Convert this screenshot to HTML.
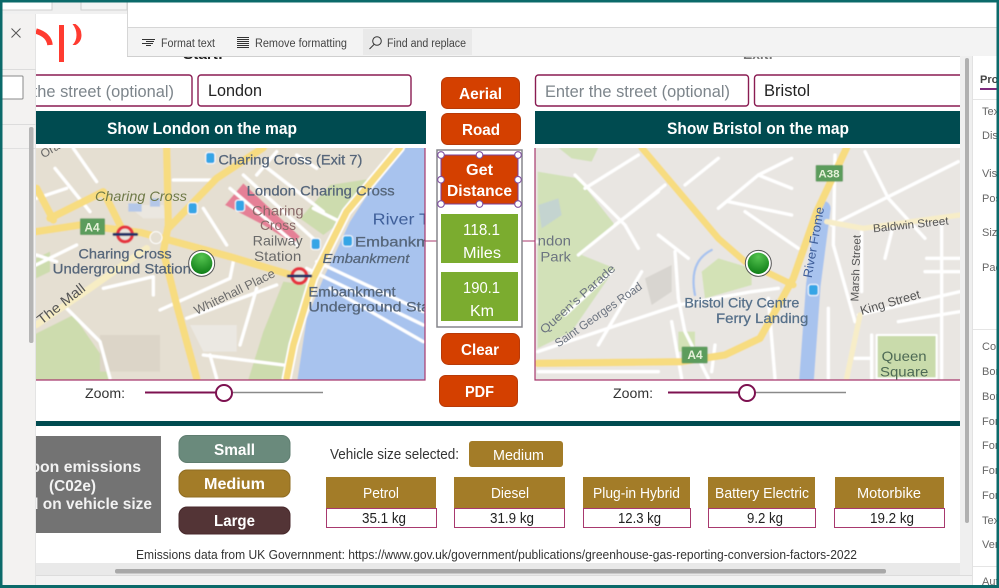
<!DOCTYPE html>
<html lang="en"><head><meta charset="utf-8"><title>Map distance app editor</title>
<style>html,body{margin:0;padding:0;background:#fff;width:999px;height:588px;overflow:hidden}svg{display:block;filter:blur(.3px)}text{font-family:"Liberation Sans",sans-serif}</style></head>
<body>
<svg width="999" height="588" viewBox="0 0 999 588" xmlns="http://www.w3.org/2000/svg">
<defs>
<clipPath id="c1"><rect x="36" y="148" width="389" height="232"/></clipPath>
<clipPath id="c2"><rect x="535" y="148" width="425" height="232"/></clipPath>
<clipPath id="cv"><rect x="36" y="56" width="924" height="507"/></clipPath>
<filter id="b" x="-2%" y="-2%" width="104%" height="104%"><feGaussianBlur stdDeviation="1.8"/></filter>
<radialGradient id="pin" cx="50%" cy="20%" r="85%"><stop offset="0" stop-color="#55c450"/><stop offset="1" stop-color="#0b7a14"/></radialGradient>
</defs>
<rect width="999" height="588" fill="#fff"/>

<!-- canvas -->
<g clip-path="url(#cv)">
<text x="183" y="59" font-size="15" font-weight="bold" fill="#222" textLength="40" lengthAdjust="spacingAndGlyphs">Start:</text>
<text x="743" y="59" font-size="15" font-weight="bold" fill="#777" textLength="30" lengthAdjust="spacingAndGlyphs">Exit:</text>
<!-- inputs -->
<rect x="-20" y="75" width="212" height="31" rx="3" fill="#fff" stroke="#8a1c52" stroke-width="1.4"/>
<text x="-11" y="97" font-size="17" fill="#7d858b" textLength="185" lengthAdjust="spacingAndGlyphs">Enter the street (optional)</text>
<rect x="198" y="75" width="213" height="31" rx="3" fill="#fff" stroke="#8a1c52" stroke-width="1.4"/>
<text x="208" y="96" font-size="17" fill="#222" textLength="54" lengthAdjust="spacingAndGlyphs">London</text>
<rect x="535.5" y="75" width="213" height="31" rx="3" fill="#fff" stroke="#8a1c52" stroke-width="1.4"/>
<text x="545" y="97" font-size="17" fill="#7d858b" textLength="185" lengthAdjust="spacingAndGlyphs">Enter the street (optional)</text>
<rect x="754.5" y="75" width="230" height="31" rx="3" fill="#fff" stroke="#8a1c52" stroke-width="1.4"/>
<text x="764" y="96" font-size="17" fill="#222" textLength="46" lengthAdjust="spacingAndGlyphs">Bristol</text>
<!-- bars -->
<rect x="36" y="111" width="390" height="33" fill="#004b50"/>
<text x="107" y="134" font-size="16.5" font-weight="bold" fill="#fff" textLength="190" lengthAdjust="spacingAndGlyphs">Show London on the map</text>
<rect x="535" y="111" width="425" height="33" fill="#004b50"/>
<text x="667" y="134" font-size="16.5" font-weight="bold" fill="#fff" textLength="182" lengthAdjust="spacingAndGlyphs">Show Bristol on the map</text>
</g>

<!-- left map -->
<g clip-path="url(#c1)"><g transform="translate(30,145) scale(.33333)" filter="url(#b)" fill="none" stroke-linecap="round" stroke-linejoin="round">
<rect x="0" y="0" width="1200" height="720" fill="#e5dfd2"/>
<path d="M1130 0L1050 90 960 230 880 400 830 520 800 720H1200V0Z" fill="#a8c3ee"/>
<path d="M1030 100L900 120 810 220 880 270 960 210ZM760 410L835 420 800 560 770 720H650L700 560Z" fill="#cddcae"/>
<path d="M0 575L130 510 220 640 240 720H0ZM18 340L60 320 60 380 18 400Z" fill="#cddcae"/>
<path d="M210 570H390V680H210Z" fill="#dcd5c8"/>
<path d="M480 540H620V620H520Z" fill="#ebe8e2"/>
<path d="M585 180L640 115 810 275 790 295 700 240Z" fill="#e58096"/>
<path d="M290 180H400L410 220H340Z" fill="#ebe7e0"/>
<path d="M295 175h40v25h-40zM360 160h30v25h-30z" fill="#b4c7e8"/>
<g stroke="#fff" stroke-width="10">
<path d="M75 70L180 200M130 10L200 110M20 160L110 130M520 190L590 300M600 130L800 300M640 90L860 290M700 60L880 200M430 105H560M740 20L680 90M850 190L930 230M800 30L860 70"/>
<path d="M18 360L140 300M220 430L370 395 370 450M390 495L600 400 610 350M470 520L740 420M680 430L630 600M520 630L760 660M540 630L560 700M110 490L210 590 240 700M20 330L80 350M830 370L1180 540M860 350L1180 500M900 430L1180 590"/>
</g>
<g stroke="#f7dc80" stroke-width="22">
<path d="M18 260L150 240 330 262 380 275 600 335 800 395"/>
<path d="M410 8L415 240 400 320 440 480 500 700"/>
<path d="M700 8L560 100 415 250"/>
<path d="M20 130L70 225M60 220L220 140 280 260"/>
</g>
<path d="M1110 8L950 200 850 400 790 600 770 700" stroke="#fff" stroke-width="30"/>
<path d="M1110 8L950 200 850 400 790 600 770 700" stroke="#f7dc80" stroke-width="20"/>
<path d="M18 540L180 430 350 310" stroke="#f7edc4" stroke-width="20"/>
<circle cx="378" cy="278" r="18" fill="#e5dfd2" stroke="#fff" stroke-width="3"/>
<rect x="150" y="220" width="75" height="50" rx="3" fill="#5c9c5c" stroke="none"/>
<path d="M285 268m-22 0a22 22 0 1 0 44 0a22 22 0 1 0-44 0M808 393m-22 0a22 22 0 1 0 44 0a22 22 0 1 0-44 0" stroke="#e5343f" stroke-width="10" fill="#e8e4dc"/>
<path d="M252 268H320M775 393H842" stroke="#243066" stroke-width="9"/>
<g fill="#35a5e6" stroke="#fff" stroke-width="3"><rect x="527" y="22" width="28" height="34" rx="8"/><rect x="474" y="173" width="28" height="34" rx="8"/><rect x="616" y="165" width="28" height="34" rx="8"/><rect x="843" y="280" width="28" height="34" rx="8"/><rect x="938" y="272" width="30" height="32" rx="8"/></g>
</g>
<g transform="translate(30,145) scale(.33333)" font-size="44" fill="#56667a" stroke="#56667a" stroke-width=".8">
<text x="565" y="58" textLength="432" lengthAdjust="spacingAndGlyphs" font-size="42">Charing Cross (Exit 7)</text>
<text x="650" y="152" textLength="444" lengthAdjust="spacingAndGlyphs" font-size="42">London Charing Cross</text>
<text x="195" y="168" textLength="276" lengthAdjust="spacingAndGlyphs" font-style="italic" fill="#6f7a48" stroke="none" font-size="42">Charing Cross</text>
<text x="666" y="212" textLength="155" lengthAdjust="spacingAndGlyphs" fill="#8a6a6a" stroke="none" font-size="42">Charing</text>
<text x="690" y="255" textLength="108" lengthAdjust="spacingAndGlyphs" fill="#8a6a6a" stroke="none" font-size="42">Cross</text>
<text x="668" y="302" textLength="150" lengthAdjust="spacingAndGlyphs" fill="#6a6a6a" stroke="none" font-size="42">Railway</text>
<text x="672" y="348" textLength="142" lengthAdjust="spacingAndGlyphs" fill="#6a6a6a" stroke="none" font-size="42">Station</text>
<text x="1028" y="238" textLength="172" lengthAdjust="spacingAndGlyphs" fill="#3f5f9a" stroke="none" font-size="46">River T</text>
<text x="975" y="304" textLength="225" lengthAdjust="spacingAndGlyphs" font-size="42">Embankm</text>
<text x="878" y="354" textLength="260" lengthAdjust="spacingAndGlyphs" font-style="italic" font-size="40">Embankment</text>
<text x="835" y="454" textLength="262" lengthAdjust="spacingAndGlyphs" font-size="42">Embankment</text>
<text x="835" y="500" textLength="365" lengthAdjust="spacingAndGlyphs" font-size="42">Underground Sta</text>
<text x="145" y="340" textLength="280" lengthAdjust="spacingAndGlyphs" font-size="42">Charing Cross</text>
<text x="68" y="385" textLength="415" lengthAdjust="spacingAndGlyphs" font-size="42">Underground Station</text>
<text transform="translate(500,510) rotate(-26)" textLength="265" lengthAdjust="spacingAndGlyphs" font-size="38" fill="#6d6d6d" stroke="none">Whitehall Place</text>
<text transform="translate(35,540) rotate(-38)" textLength="170" lengthAdjust="spacingAndGlyphs" font-size="42" fill="#555" stroke="none">The Mall</text>
<text transform="translate(40,40) rotate(-30)" font-size="36" fill="#666" stroke="none">Ora</text>
<text x="163" y="260" font-size="36" font-weight="bold" fill="#e4f0d8" stroke="none">A4</text>
</g>
<g transform="translate(30,145) scale(.33333)"><circle cx="515" cy="355" r="39" fill="#fff" stroke="#555" stroke-width="3"/><circle cx="515" cy="355" r="32" fill="url(#pin)"/></g>
</g>
<path d="M36 380H425V148" fill="none" stroke="#a8396e" stroke-width="1.2"/>

<!-- right map -->
<g clip-path="url(#c2)"><g transform="translate(425,145) scale(.33333)" filter="url(#b)" fill="none" stroke-linecap="round" stroke-linejoin="round">
<rect x="300" y="0" width="1320" height="720" fill="#e9e6e2"/>
<path d="M338 80L460 100 570 240 470 330 570 370 440 560 338 610ZM400 8H520L500 50 440 40Z" fill="#d2e1b8"/>
<path d="M340 180L400 160 410 210 350 250Z" fill="#c4d4d0"/>
<path d="M830 380L880 340 980 370 980 420 840 460Z" fill="#d3e2b6"/>
<path d="M660 400L740 360 740 440 680 480Z" fill="#d8d5d0"/>
<path d="M760 560H810V620H760Z" fill="#d3e2b6"/>
<path d="M1355 570H1535V700H1355Z" fill="#c9dbab" stroke="#fff" stroke-width="6"/>
<path d="M1195 190L1165 420 1145 700" stroke="#a8c3ee" stroke-width="44"/>
<path d="M810 450Q790 350 860 315" stroke="#a8c3ee" stroke-width="7"/>
<g stroke="#fff" stroke-width="10">
<path d="M340 290H0M460 330L720 120M480 130L640 30M450 90L600 240 640 310M570 240L700 140M700 270L790 340M780 120L880 40M880 190L1000 90 1100 40M910 170L1100 210M960 200L1120 310M1000 90L1100 130"/>
<path d="M338 620L760 480 980 440 1060 430M560 380L420 510M650 380L520 600M740 530L770 700M750 320L760 460 780 560 850 700M340 680H700M870 600L860 680M1030 460L1050 700"/>
<path d="M1230 30L1225 300 1290 530M1320 20L1390 160 1500 280M1600 50L1220 240M1310 250V440M1400 260L1380 340M1550 240V700M1505 340H1605M1500 380H1605M1300 510L1605 440M1420 530L1605 500M1210 490V700M1290 640H1340M1340 700V570"/>
</g>
<path d="M650 8L880 280 960 350 1105 420" stroke="#f7dc80" stroke-width="20"/>
<path d="M1265 8L1175 200 1105 400 1005 580 900 630 770 650 338 655" stroke="#f7dc80" stroke-width="22"/>
<path d="M1205 230L1315 250 1605 210M1305 510L1265 700" stroke="#f7edc8" stroke-width="16"/>
<rect x="770" y="605" width="78" height="50" rx="3" fill="#5c9c5c" stroke="none"/>
<rect x="1172" y="60" width="82" height="50" rx="3" fill="#5c9c5c" stroke="none"/>
<rect x="1150" y="418" width="30" height="34" rx="8" fill="#35a5e6" stroke="#fff" stroke-width="3"/>
</g>
<g transform="translate(425,145) scale(.33333)" font-size="42" fill="#6c7480">
<text x="338" y="302" textLength="100" lengthAdjust="spacingAndGlyphs">ndon</text>
<text x="346" y="350" textLength="92" lengthAdjust="spacingAndGlyphs">Park</text>
<text x="778" y="488" textLength="345" lengthAdjust="spacingAndGlyphs" fill="#56708a" stroke="#56708a" stroke-width=".8">Bristol City Centre</text>
<text x="873" y="534" textLength="277" lengthAdjust="spacingAndGlyphs" fill="#56708a" stroke="#56708a" stroke-width=".8">Ferry Landing</text>
<text transform="translate(358,568) rotate(-42)" textLength="290" lengthAdjust="spacingAndGlyphs" font-size="36">Queen's Parade</text>
<text transform="translate(400,608) rotate(-35)" textLength="310" lengthAdjust="spacingAndGlyphs" font-size="36">Saint Georges Road</text>
<text transform="translate(1160,400) rotate(-80)" textLength="215" lengthAdjust="spacingAndGlyphs" font-size="38" fill="#3f5f9a">River Frome</text>
<text transform="translate(1300,470) rotate(-88)" textLength="200" lengthAdjust="spacingAndGlyphs" font-size="34" fill="#555">Marsh Street</text>
<text transform="translate(1345,262) rotate(-6)" textLength="228" lengthAdjust="spacingAndGlyphs" font-size="34" fill="#555">Baldwin Street</text>
<text transform="translate(1310,510) rotate(-16)" textLength="185" lengthAdjust="spacingAndGlyphs" font-size="38" fill="#555">King Street</text>
<text x="1370" y="648" textLength="135" lengthAdjust="spacingAndGlyphs" fill="#4e6a55">Queen</text>
<text x="1365" y="694" textLength="145" lengthAdjust="spacingAndGlyphs" fill="#4e6a55">Square</text>
<text x="787" y="642" font-size="36" font-weight="bold" fill="#e4f0d8">A4</text>
<text x="1180" y="98" font-size="32" font-weight="bold" fill="#e4f0d8" textLength="64" lengthAdjust="spacingAndGlyphs">A38</text>
</g>
<g transform="translate(425,145) scale(.33333)"><circle cx="1000" cy="355" r="39" fill="#fff" stroke="#555" stroke-width="3"/><circle cx="1000" cy="355" r="32" fill="url(#pin)"/></g>
</g>
<path d="M535 148V380H960" fill="none" stroke="#a8396e" stroke-width="1.2"/>
<path d="M425 241H437M522 241H535" stroke="#a8396e" stroke-width="1"/>

<!-- center buttons -->
<rect x="441.5" y="77.5" width="78" height="31" rx="6" fill="#d44000" stroke="#b83a08"/>
<text x="459" y="99" font-size="15.5" font-weight="bold" fill="#fff" textLength="43" lengthAdjust="spacingAndGlyphs">Aerial</text>
<rect x="441.5" y="113.5" width="79" height="31" rx="6" fill="#d44000" stroke="#b83a08"/>
<text x="462" y="135" font-size="15.5" font-weight="bold" fill="#fff" textLength="38" lengthAdjust="spacingAndGlyphs">Road</text>
<rect x="437" y="150" width="85" height="177" fill="#fff" stroke="#85858c" stroke-width="1.5"/>
<rect x="441" y="155" width="77" height="49" fill="#d44000" stroke="#7a3f9a" stroke-width="1"/>
<text x="466" y="175" font-size="15.5" font-weight="bold" fill="#fff" textLength="27" lengthAdjust="spacingAndGlyphs">Get</text>
<text x="447" y="196" font-size="15.5" font-weight="bold" fill="#fff" textLength="65" lengthAdjust="spacingAndGlyphs">Distance</text>
<g fill="#fff" stroke="#7f4f9f" stroke-width="1.1">
<circle cx="441" cy="155" r="3.3"/><circle cx="479.5" cy="155" r="3.3"/><circle cx="518" cy="155" r="3.3"/>
<circle cx="441" cy="179.7" r="3.3"/><circle cx="518" cy="179.7" r="3.3"/>
<circle cx="441" cy="204" r="3.3"/><circle cx="479.5" cy="204" r="3.3"/><circle cx="518" cy="204" r="3.3"/>
</g>
<rect x="441" y="214" width="77" height="49" fill="#7bac2f"/>
<text x="463" y="235" font-size="15.5" fill="#fff" textLength="37" lengthAdjust="spacingAndGlyphs">118.1</text>
<text x="463" y="258" font-size="15.5" fill="#fff" textLength="38" lengthAdjust="spacingAndGlyphs">Miles</text>
<rect x="441" y="272" width="77" height="49" fill="#7bac2f"/>
<text x="463" y="293" font-size="15.5" fill="#fff" textLength="37" lengthAdjust="spacingAndGlyphs">190.1</text>
<text x="470" y="316" font-size="15.5" fill="#fff" textLength="24" lengthAdjust="spacingAndGlyphs">Km</text>
<rect x="441.5" y="333.5" width="78" height="31" rx="7" fill="#d44000" stroke="#b83a08"/>
<text x="461" y="355" font-size="15.5" font-weight="bold" fill="#fff" textLength="38" lengthAdjust="spacingAndGlyphs">Clear</text>
<rect x="439.5" y="375.5" width="78" height="31" rx="6" fill="#d44000" stroke="#b83a08"/>
<text x="465" y="397" font-size="15.5" font-weight="bold" fill="#fff" textLength="29" lengthAdjust="spacingAndGlyphs">PDF</text>

<!-- zoom sliders -->
<text x="85" y="398" font-size="13.5" fill="#333" textLength="40" lengthAdjust="spacingAndGlyphs">Zoom:</text>
<path d="M224 392.5H323" stroke="#8a8a8a" stroke-width="1.5"/><path d="M145 392.5H224" stroke="#7d1150" stroke-width="2"/>
<circle cx="224" cy="393" r="8" fill="#fff" stroke="#7d1150" stroke-width="2"/>
<text x="613" y="398" font-size="13.5" fill="#333" textLength="40" lengthAdjust="spacingAndGlyphs">Zoom:</text>
<path d="M747 392.5H846" stroke="#8a8a8a" stroke-width="1.5"/><path d="M668 392.5H747" stroke="#7d1150" stroke-width="2"/>
<circle cx="747" cy="393" r="8" fill="#fff" stroke="#7d1150" stroke-width="2"/>

<rect x="36" y="421" width="924" height="5" fill="#004b50"/>

<!-- carbon box -->
<rect x="36" y="436" width="125" height="97" fill="#737373"/>
<svg x="36" y="436" width="125" height="97" viewBox="36 436 125 97">
<text x="4" y="472" font-size="15.5" font-weight="bold" fill="#f2f2f2" textLength="137" lengthAdjust="spacingAndGlyphs">Carbon emissions</text>
<text x="49" y="491" font-size="15.5" font-weight="bold" fill="#f2f2f2" textLength="47" lengthAdjust="spacingAndGlyphs">(C02e)</text>
<text x="-8" y="509" font-size="15.5" font-weight="bold" fill="#f2f2f2" textLength="160" lengthAdjust="spacingAndGlyphs">Based on vehicle size</text>
</svg>
<rect x="179" y="435.5" width="111" height="27" rx="8" fill="#6a8a7c" stroke="#5f7d70"/>
<text x="214" y="455" font-size="16" font-weight="bold" fill="#fff" textLength="41" lengthAdjust="spacingAndGlyphs">Small</text>
<rect x="179" y="470" width="111" height="27" rx="8" fill="#a37c28" stroke="#8f6c22"/>
<text x="204" y="489" font-size="16" font-weight="bold" fill="#fff" textLength="61" lengthAdjust="spacingAndGlyphs">Medium</text>
<rect x="179" y="507" width="111" height="27" rx="8" fill="#533436" stroke="#48292c"/>
<text x="214" y="526" font-size="16" font-weight="bold" fill="#fff" textLength="41" lengthAdjust="spacingAndGlyphs">Large</text>

<text x="330" y="459" font-size="14.5" fill="#333" textLength="129" lengthAdjust="spacingAndGlyphs">Vehicle size selected:</text>
<rect x="469" y="441" width="94" height="26" rx="3" fill="#a37c28"/>
<text x="493" y="460" font-size="14.5" fill="#fff" textLength="51" lengthAdjust="spacingAndGlyphs">Medium</text>

<!-- cards -->
<g fill="#a37c28">
<rect x="326" y="477" width="110" height="31"/><rect x="454" y="477" width="111" height="31"/><rect x="583" y="477" width="107" height="31"/><rect x="708" y="477" width="107" height="31"/><rect x="835" y="477" width="109" height="31"/>
</g>
<g fill="#fff" stroke="#a8396e" stroke-width="1">
<rect x="326.5" y="508.5" width="110" height="19"/><rect x="454.5" y="508.5" width="110" height="19"/><rect x="583.5" y="508.5" width="107" height="19"/><rect x="708.5" y="508.5" width="107" height="19"/><rect x="834.5" y="508.5" width="110" height="19"/>
</g>
<g font-size="14.5" fill="#fff">
<text x="363" y="498" textLength="36" lengthAdjust="spacingAndGlyphs">Petrol</text>
<text x="491" y="498" textLength="38" lengthAdjust="spacingAndGlyphs">Diesel</text>
<text x="593" y="498" textLength="87" lengthAdjust="spacingAndGlyphs">Plug-in Hybrid</text>
<text x="715" y="498" textLength="94" lengthAdjust="spacingAndGlyphs">Battery Electric</text>
<text x="857" y="498" textLength="64" lengthAdjust="spacingAndGlyphs">Motorbike</text>
</g>
<g font-size="14.5" fill="#222">
<text x="362" y="523" textLength="44" lengthAdjust="spacingAndGlyphs">35.1 kg</text>
<text x="490" y="523" textLength="44" lengthAdjust="spacingAndGlyphs">31.9 kg</text>
<text x="618" y="523" textLength="43" lengthAdjust="spacingAndGlyphs">12.3 kg</text>
<text x="747" y="523" textLength="36" lengthAdjust="spacingAndGlyphs">9.2 kg</text>
<text x="870" y="523" textLength="44" lengthAdjust="spacingAndGlyphs">19.2 kg</text>
</g>
<text x="136" y="559" font-size="13" fill="#333" textLength="721" lengthAdjust="spacingAndGlyphs">Emissions data from UK Governnment: https://www.gov.uk/government/publications/greenhouse-gas-reporting-conversion-factors-2022</text>

<!-- horizontal scrollbar + status -->
<rect x="36" y="563" width="924" height="12" fill="#e9e9e9"/>
<rect x="115" y="569" width="771" height="4.5" rx="2" fill="#a8a8a8"/>
<rect x="36" y="575" width="936" height="10" fill="#f3f3f3"/>
<rect x="36" y="575" width="936" height="1" fill="#dcdcdc"/>

<!-- vertical scrollbar -->
<rect x="960" y="56" width="12" height="519" fill="#efefef"/>
<rect x="965" y="58" width="4" height="465" rx="2" fill="#b0b0b0"/>

<!-- right panel -->
<rect x="972" y="56" width="24" height="529" fill="#fff"/>
<rect x="972" y="56" width="1" height="529" fill="#e2e2e2"/>
<text x="980" y="83" font-size="11" font-weight="bold" fill="#444">Prop</text>
<rect x="980" y="88" width="17" height="2" fill="#7d2a7d"/>
<rect x="973" y="99" width="24" height="1" fill="#e5e5e5"/>
<g font-size="11" fill="#666">
<text x="982" y="115">Text</text><text x="982" y="139">Disp</text><text x="982" y="177">Visi</text><text x="982" y="202">Pos</text><text x="982" y="236">Size</text><text x="982" y="271">Pad</text>
<text x="982" y="350">Colo</text><text x="982" y="375">Bord</text><text x="982" y="400">Bord</text><text x="982" y="425">Font</text><text x="982" y="449">Font</text><text x="982" y="474">Font</text><text x="982" y="499">Font</text><text x="982" y="524">Text</text><text x="982" y="548">Vert</text><text x="982" y="585">Auto</text>
</g>
<rect x="973" y="329" width="24" height="1" fill="#e5e5e5"/>
<rect x="973" y="566" width="24" height="1" fill="#e5e5e5"/>

<!-- top bar and toolbar -->
<rect x="36" y="14" width="91" height="42" fill="#fff"/>
<rect x="127" y="2" width="870" height="25" fill="#fff"/>
<rect x="127" y="27" width="870" height="1" fill="#d6d6d6"/>
<rect x="127" y="28" width="870" height="28" fill="#f3f3f3"/>
<rect x="127" y="56" width="833" height="1" fill="#cfcfcf"/>
<rect x="127" y="2" width="1" height="54" fill="#d6d6d6"/>
<rect x="363" y="29" width="109" height="26" fill="#e9e9e9"/>
<g stroke="#333" stroke-width="1" fill="none">
<path d="M142 39.5H155M146 41.5H154M142 43.5H153M146 45.5H151"/>
<path d="M237 37.5H249M237 39.5H249M237 41.5H249M237 43.5H249M237 45.5H249M237 47.5H249"/>
<circle cx="377" cy="41" r="4.3"/><path d="M374 44.5L369.5 49"/>
</g>
<g font-size="11.5" fill="#444">
<text x="161" y="47" textLength="54" lengthAdjust="spacingAndGlyphs">Format text</text>
<text x="255" y="47" textLength="92" lengthAdjust="spacingAndGlyphs">Remove formatting</text>
<text x="387" y="47" textLength="79" lengthAdjust="spacingAndGlyphs">Find and replace</text>
</g>

<!-- logo -->
<path d="M36 31Q49 35 50 45" fill="none" stroke="#ff3b30" stroke-width="5.5"/>
<rect x="59" y="25" width="5" height="37" fill="#ff3b30"/>
<path d="M72.5 24H75.5Q81.5 28 81.5 35T75.5 45H72.5Q76.5 41 76.5 35T72.5 24Z" fill="#ff3b30"/>

<!-- left panel -->
<rect x="2" y="14" width="34" height="571" fill="#f3f2f1"/>
<rect x="35" y="14" width="1" height="571" fill="#e4e4e4"/>
<rect x="2" y="69" width="34" height="1" fill="#dcdcdc"/>
<rect x="-3" y="76" width="26" height="23" rx="1" fill="#fff" stroke="#8a8a8a"/>
<rect x="2" y="124" width="34" height="1" fill="#dcdcdc"/>
<rect x="2" y="148" width="34" height="1" fill="#e0e0e0"/>
<rect x="29" y="127" width="4.5" height="216" rx="2" fill="#b5b5b5"/>
<path d="M11.5 28.5L20.5 37.5M20.5 28.5L11.5 37.5" stroke="#555" stroke-width="1" fill="none"/>

<!-- top-left tabs -->
<rect x="2" y="2" width="125" height="12" fill="#f0f0f0"/>
<rect x="2" y="2" width="50" height="8" fill="#fff" stroke="#d0d0d0"/>
<rect x="81" y="2" width="46" height="8" fill="#f5f5f5" stroke="#d0d0d0"/>

<!-- window frame -->
<rect x="0" y="0" width="999" height="2.5" fill="#0b6a6a"/>
<rect x="0" y="0" width="2.5" height="588" fill="#0b6a6a"/>
<rect x="996.5" y="0" width="2.5" height="588" fill="#0b6a6a"/>
<rect x="0" y="585" width="999" height="3" fill="#0b6a6a"/>
</svg>
</body></html>
